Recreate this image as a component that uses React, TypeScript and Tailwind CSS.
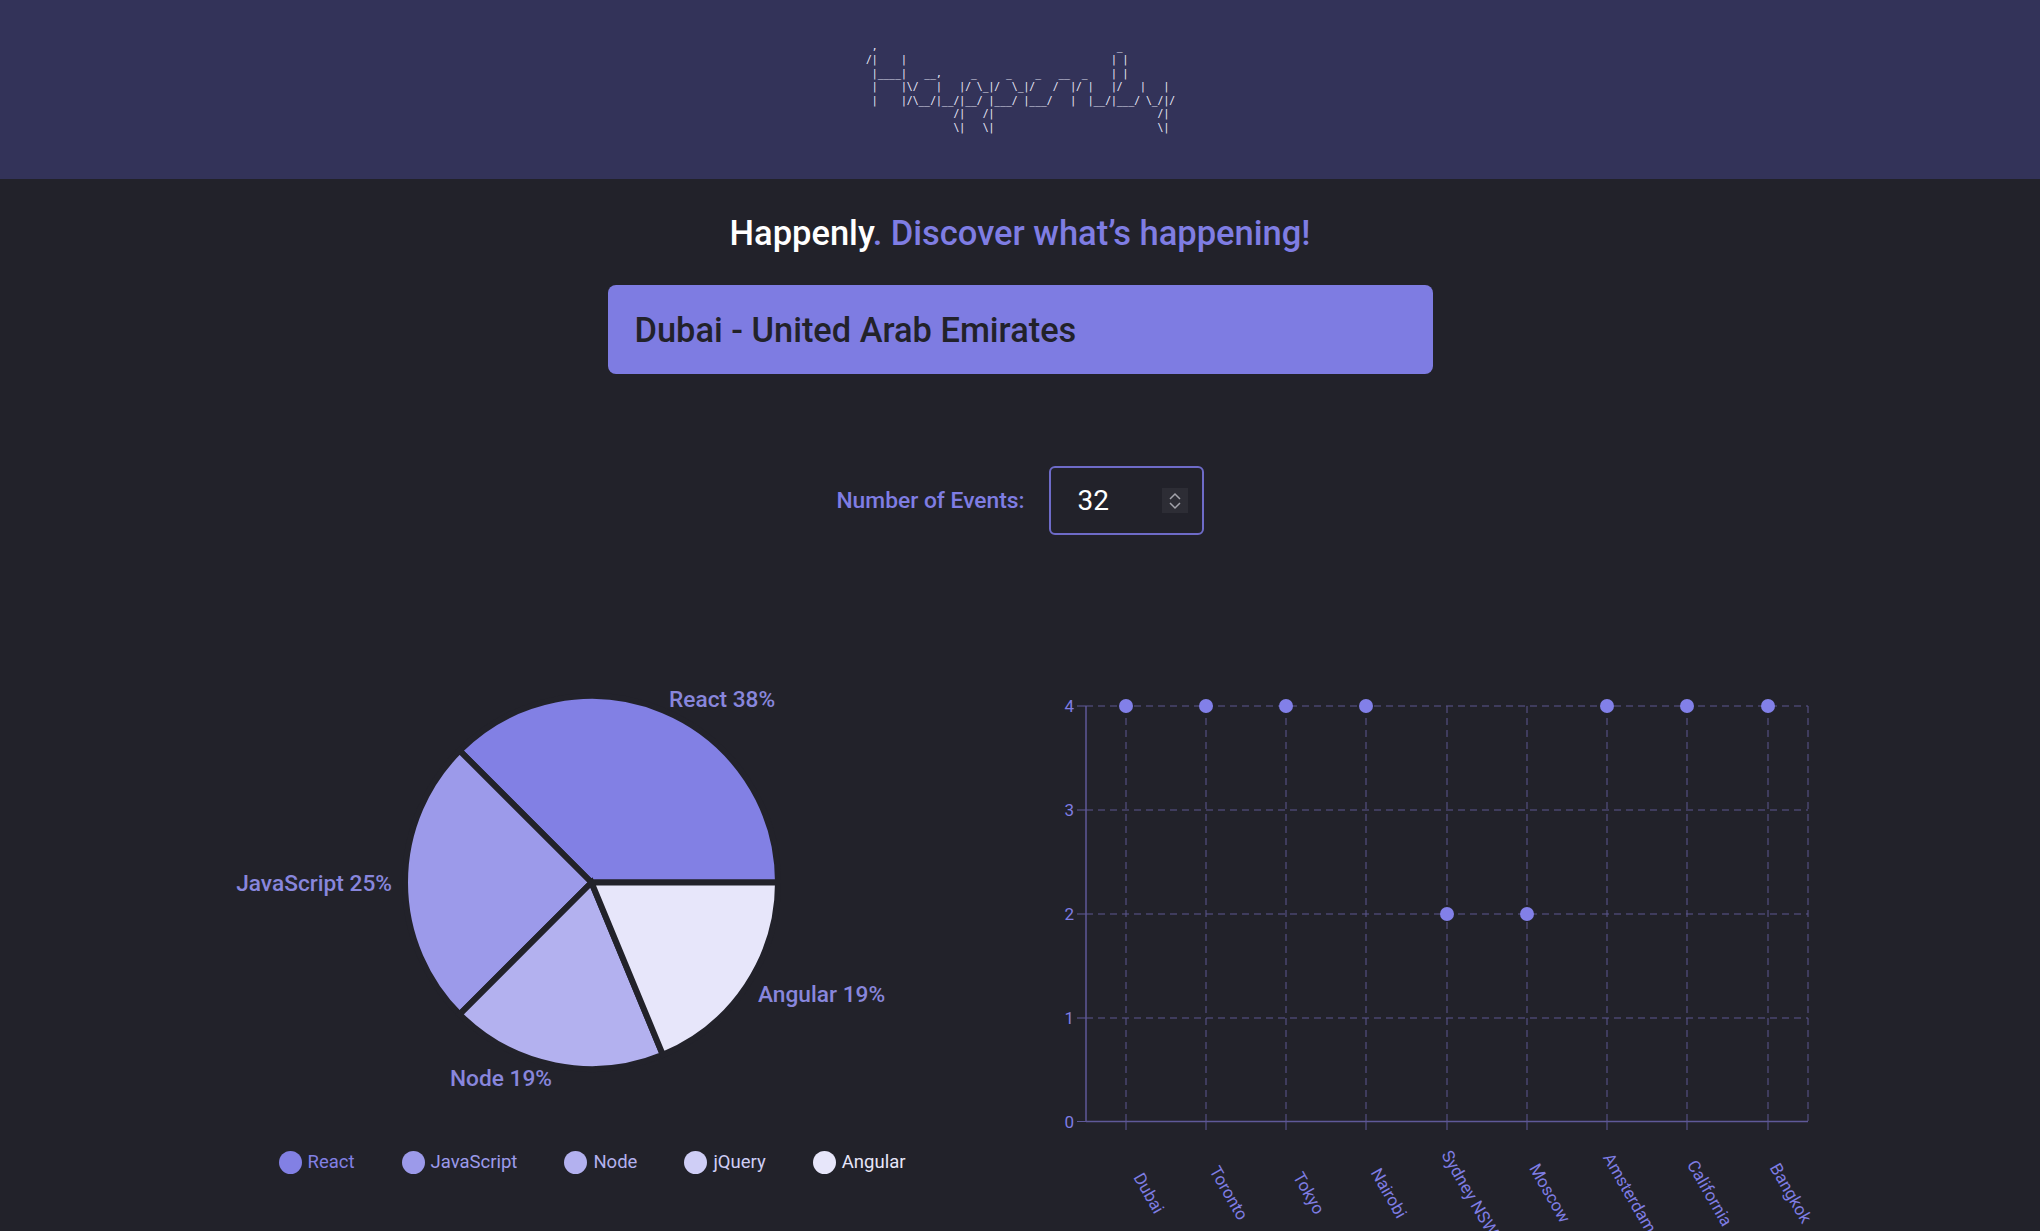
import React from 'react';

const LOGO = String.raw` ,                                         _
/|    |                                   | |
 |____|   __,     _     _    _   __  _    | |
 |    |\/   |   |/ \_|/  \_|/   /  |/ |   |/   |   |
 |    |/\__/|__/|__/ |___/ |___/   |  |__/|___/ \_/|/
               /|   /|                            /|
               \|   \|                            \|`;

const pieSlices = [
  { name: 'React', from: 0, to: 135, color: '#8280e4' },
  { name: 'JavaScript', from: 135, to: 225, color: '#9c9aea' },
  { name: 'Node', from: 225, to: 292.5, color: '#b3b1ef' },
  { name: 'Angular', from: 292.5, to: 360, color: '#e7e6fa' },
];

const legend = [
  { name: 'React', color: '#8280e4' },
  { name: 'JavaScript', color: '#9c9aea' },
  { name: 'Node', color: '#b3b1ef' },
  { name: 'jQuery', color: '#cfcef6' },
  { name: 'Angular', color: '#e7e6fa' },
];

const pieLabels = [
  { text: 'React 38%', x: 669, y: 699, anchor: 'start' },
  { text: 'JavaScript 25%', x: 392, y: 883, anchor: 'end' },
  { text: 'Node 19%', x: 552, y: 1078, anchor: 'end' },
  { text: 'Angular 19%', x: 758, y: 994, anchor: 'start' },
];

const cities = [
  { name: 'Dubai', x: 1126, count: 4 },
  { name: 'Toronto', x: 1206, count: 4 },
  { name: 'Tokyo', x: 1286, count: 4 },
  { name: 'Nairobi', x: 1366, count: 4 },
  { name: 'Sydney NSW', x: 1447, count: 2 },
  { name: 'Moscow', x: 1527, count: 2 },
  { name: 'Amsterdam', x: 1607, count: 4 },
  { name: 'California', x: 1687, count: 4 },
  { name: 'Bangkok', x: 1768, count: 4 },
];

const yTicks = [
  { value: 0, y: 1121.5 },
  { value: 1, y: 1018 },
  { value: 2, y: 914 },
  { value: 3, y: 810 },
  { value: 4, y: 706 },
];

const slicePath = (from: number, to: number) => {
  const cx = 591.5;
  const cy = 882.5;
  const r = 186.5;
  const point = (deg: number) => {
    const a = (deg * Math.PI) / 180;
    return `${cx + r * Math.cos(a)} ${cy - r * Math.sin(a)}`;
  };
  return `M${cx} ${cy} L${point(from)} A${r} ${r} 0 ${to - from > 180 ? 1 : 0} 0 ${point(to)} Z`;
};

const PieChart = () => (
  <svg width={740} height={460} viewBox="222 660 740 460">
    {pieSlices.map((s) => (
      <path key={s.name} d={slicePath(s.from, s.to)} fill={s.color} stroke="#22222a" strokeWidth={6} />
    ))}
    {pieLabels.map((l) => (
      <text
        key={l.text}
        x={l.x}
        y={l.y}
        textAnchor={l.anchor as 'start' | 'end'}
        dominantBaseline="central"
        fill="#8886dc"
        fontSize={22.7}
        fontWeight={500}
      >
        {l.text}
      </text>
    ))}
  </svg>
);

const ScatterChart = () => (
  <svg width={800} height={571} viewBox="1040 660 800 571">
    {/* grid */}
    {yTicks.slice(1).map((t) => (
      <line key={t.value} x1={1086} x2={1808} y1={t.y} y2={t.y} stroke="#5c5790" strokeDasharray="7 5" />
    ))}
    {[...cities.map((c) => c.x), 1808].map((x) => (
      <line key={x} x1={x} x2={x} y1={706} y2={1121} stroke="#5c5790" strokeDasharray="7 5" />
    ))}
    {/* axes */}
    <line x1={1086} x2={1086} y1={706} y2={1121.5} stroke="#5f5999" strokeWidth={1.5} />
    <line x1={1086} x2={1808} y1={1121.5} y2={1121.5} stroke="#5f5999" strokeWidth={1.5} />
    {yTicks.map((t) => (
      <g key={t.value}>
        <line x1={1077} x2={1086} y1={t.y} y2={t.y} stroke="#5f5999" />
        <text x={1074} y={t.y} textAnchor="end" dominantBaseline="central" fill="#7f7de3" fontSize={17}>
          {t.value}
        </text>
      </g>
    ))}
    {cities.map((c) => (
      <g key={c.name}>
        <line x1={c.x} x2={c.x} y1={1121} y2={1130} stroke="#5f5999" />
        <text
          x={c.x + 23}
          y={1193}
          textAnchor="middle"
          dominantBaseline="central"
          fill="#7f7de3"
          fontSize={17}
          transform={`rotate(60 ${c.x + 23} 1193)`}
        >
          {c.name}
        </text>
        <circle cx={c.x} cy={c.count === 4 ? 706 : 914} r={7} fill="#8280e8" />
      </g>
    ))}
  </svg>
);

export default function App() {
  return (
    <div className="h-screen overflow-hidden bg-[#22222a] font-['Roboto',sans-serif]">
      <header className="flex h-[179px] items-center justify-center bg-[#333359] pb-[5px]">
        <pre className="w-[308px] font-['DejaVu_Sans_Mono',monospace] text-[9.7px] leading-[13.5px] text-[#eeeefc]">
          {LOGO}
        </pre>
      </header>

      <h1 className="mt-[28px] text-center text-[34.5px] leading-[52px] font-medium text-[#7f7de3]">
        <span className="text-white">Happenly</span>. Discover what’s happening!
      </h1>

      <div className="mx-auto mt-[26px] flex h-[89px] w-[825px] items-center rounded-lg bg-[#7e7ce2] px-[27px] pt-[2px] text-[34.4px] font-medium text-[#22222a]">
        Dubai - United Arab Emirates
      </div>

      <div className="mt-[92px] flex items-center justify-center gap-6">
        <label className="pt-[2px] text-[22.8px] font-medium text-[#7f7de3]">Number of Events:</label>
        <div className="flex h-[69px] w-[155px] items-center justify-between rounded-md border-2 border-[#6e6bc8] pr-[14px] pl-[27px] text-[28px] text-white">
          32
          <span className="flex h-[25px] w-[26px] flex-col items-center justify-center bg-[#2d2d35] text-[#a3a3ab]">
            <svg width="14" height="9" viewBox="0 0 14 9" fill="none" stroke="currentColor" strokeWidth="1.5">
              <path d="M2 7l5-5 5 5" />
            </svg>
            <svg width="14" height="9" viewBox="0 0 14 9" fill="none" stroke="currentColor" strokeWidth="1.5">
              <path d="M2 2l5 5 5-5" />
            </svg>
          </span>
        </div>
      </div>

      <div className="mt-[125px] flex gap-[78px] pl-[222px]">
        <div className="flex w-[740px] flex-col items-center">
          <PieChart />
          <ul className="mt-[30px] flex gap-[47px]">
            {legend.map((item) => (
              <li key={item.name} className="flex items-center gap-[6px] text-[18.5px] leading-[24px]" style={{ color: item.color }}>
                <span className="h-[23px] w-[23px] rounded-full" style={{ backgroundColor: item.color }} />
                {item.name}
              </li>
            ))}
          </ul>
        </div>
        <ScatterChart />
      </div>
    </div>
  );
}
